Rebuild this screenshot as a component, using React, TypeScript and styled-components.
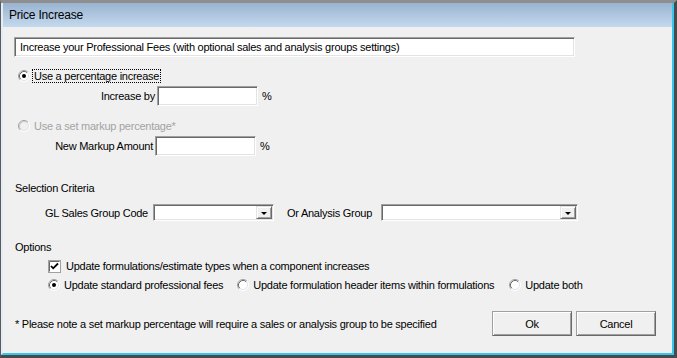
import styled, { createGlobalStyle } from "styled-components";

const GlobalStyle = createGlobalStyle`
  html, body {
    margin: 0;
    padding: 0;
    background: #6d6d6d;
  }
  body {
    font-family: "Liberation Sans", Arial, sans-serif;
    font-size: 11px;
    letter-spacing: -0.25px;
    color: #000;
  }
`;

const Window = styled.div`
  width: 677px;
  height: 358px;
  box-sizing: border-box;
  border-top: 3px solid #8e8e8e;
  border-left: 1px solid #5a5a5a;
  border-right: 3px solid #4a4a4a;
  border-bottom: 3px solid #4a4a4a;
  background: #f0f0f0;
`;

const Frame = styled.div`
  height: 100%;
  box-sizing: border-box;
  border-left: 2px solid #e4ecf5;
  border-right: 2px solid #38c6f0;
  border-bottom: 2px solid #38c6f0;
  display: flex;
  flex-direction: column;
`;

const TitleBar = styled.div`
  height: 24px;
  flex: none;
  display: flex;
  align-items: center;
  padding-left: 6px;
  background: linear-gradient(#99b4d1, #c4d9ee);
  font-size: 12px;
  letter-spacing: -0.2px;
  color: #000;
`;

const Client = styled.div`
  flex: 1;
  display: flex;
  flex-direction: column;
  padding: 0 16px 0 11px;
`;

const Row = styled.div<{ $top: number; $indent?: number; $h?: number }>`
  display: flex;
  align-items: center;
  margin-top: ${(p) => p.$top}px;
  padding-left: ${(p) => p.$indent ?? 0}px;
  height: ${(p) => p.$h ?? 14}px;
  white-space: nowrap;
`;

const sunken = `
  box-sizing: border-box;
  background: #fff;
  border-style: solid;
  border-width: 1px;
  border-color: #a0a0a0 #fff #fff #a0a0a0;
  box-shadow: inset 1px 1px #696969, inset -1px -1px #e3e3e3;
`;

const DescBox = styled.div`
  ${sunken}
  width: 561px;
  height: 20px;
  display: flex;
  align-items: center;
  padding-left: 5px;
  white-space: nowrap;
`;

const Field = styled.div<{ $w: number }>`
  ${sunken}
  width: ${(p) => p.$w}px;
  height: 20px;
`;

const FieldLabel = styled.span<{ $w: number; $gap: number; $align?: string; $left?: number }>`
  width: ${(p) => p.$w}px;
  margin-right: ${(p) => p.$gap}px;
  margin-left: ${(p) => p.$left ?? 0}px;
  text-align: ${(p) => p.$align ?? "right"};
  flex: none;
`;

const Unit = styled.span`
  margin-left: 4px;
`;

const Combo = styled.div<{ $w: number }>`
  ${sunken}
  width: ${(p) => p.$w}px;
  height: 17px;
  display: flex;
  justify-content: flex-end;
  padding: 1px;
`;

const DropButton = styled.div`
  width: 16px;
  height: 13px;
  box-sizing: border-box;
  background: #f0f0f0;
  border-style: solid;
  border-width: 1px;
  border-color: #e3e3e3 #696969 #696969 #e3e3e3;
  box-shadow: inset 1px 1px #fff, inset -1px -1px #a0a0a0;
  display: flex;
  align-items: center;
  justify-content: center;
  &::after {
    content: "";
    border-left: 3px solid transparent;
    border-right: 3px solid transparent;
    border-top: 3px solid #000;
    margin-top: 1px;
  }
`;

const Choice = styled.label<{ $disabled?: boolean; $gap?: number; $after?: number }>`
  display: flex;
  align-items: center;
  gap: ${(p) => p.$gap ?? 4}px;
  margin-right: ${(p) => p.$after ?? 0}px;
  color: ${(p) => (p.$disabled ? "#a3a3a3" : "#000")};
`;

const Focused = styled.span`
  outline: 1px dotted #000;
  outline-offset: 0px;
  padding: 0 1px;
`;

const Heading = styled.div<{ $top: number }>`
  margin-top: ${(p) => p.$top}px;
  height: 14px;
  line-height: 14px;
  padding-left: 1px;
`;

const Footer = styled.div`
  margin-top: 19px;
  display: flex;
  align-items: center;
`;

const Note = styled.span`
  flex: 1;
  padding-left: 1px;
  white-space: nowrap;
`;

const Button = styled.button`
  width: 80px;
  height: 25px;
  margin-left: 4px;
  box-sizing: border-box;
  font: inherit;
  letter-spacing: inherit;
  color: #000;
  background: #f0f0f0;
  border-style: solid;
  border-width: 1px;
  border-color: #a0a0a0 #696969 #696969 #a0a0a0;
  box-shadow: inset 1px 1px #fff, inset -1px -1px #a0a0a0;
  padding: 0;
`;

function Radio({ checked, disabled }: { checked?: boolean; disabled?: boolean }) {
  return (
    <svg width="12" height="12" viewBox="0 0 12 12">
      <circle cx="6" cy="6" r="5" fill={disabled ? "#f0f0f0" : "#fff"} />
      <path d="M2.11 9.89 A5.5 5.5 0 0 1 9.89 2.11" fill="none" stroke="#a0a0a0" />
      <path d="M9.89 2.11 A5.5 5.5 0 0 1 2.11 9.89" fill="none" stroke="#fff" />
      <path d="M2.82 9.18 A4.5 4.5 0 0 1 9.18 2.82" fill="none" stroke={disabled ? "#c8c8c8" : "#696969"} />
      <path d="M9.18 2.82 A4.5 4.5 0 0 1 2.82 9.18" fill="none" stroke="#e3e3e3" />
      {checked && <circle cx="6" cy="6" r="2" fill="#000" />}
    </svg>
  );
}

function Check() {
  return (
    <svg width="13" height="13" viewBox="0 0 13 13">
      <rect x="0.5" y="0.5" width="12" height="12" fill="#fff" stroke="#a0a0a0" />
      <path d="M1.5 11.5 V1.5 H11.5" fill="none" stroke="#696969" />
      <path d="M3 6 L5.2 8.3 L10 3.5" fill="none" stroke="#000" strokeWidth="1.8" />
    </svg>
  );
}

export default function App() {
  return (
    <>
      <GlobalStyle />
      <Window>
        <Frame>
          <TitleBar>Price Increase</TitleBar>
          <Client>
            <Row $top={10} $h={20}>
              <DescBox>
                Increase your Professional Fees (with optional sales and analysis groups settings)
              </DescBox>
            </Row>

            <Row $top={11} $indent={4} $h={16}>
              <Choice $gap={3}>
                <Radio checked />
                <Focused>Use a percentage increase</Focused>
              </Choice>
            </Row>
            <Row $top={2} $h={20}>
              <FieldLabel $w={141} $gap={2}>Increase by</FieldLabel>
              <Field $w={101} />
              <Unit>%</Unit>
            </Row>

            <Row $top={12} $indent={4} $h={16}>
              <Choice $gap={4} $disabled>
                <Radio disabled />
                Use a set markup percentage*
              </Choice>
            </Row>
            <Row $top={2} $h={20}>
              <FieldLabel $w={139} $gap={2}>New Markup Amount</FieldLabel>
              <Field $w={101} />
              <Unit>%</Unit>
            </Row>

            <Heading $top={25}>Selection Criteria</Heading>
            <Row $top={9} $h={17}>
              <FieldLabel $w={134} $gap={5}>GL Sales Group Code</FieldLabel>
              <Combo $w={121}>
                <DropButton />
              </Combo>
              <FieldLabel $w={91} $gap={3} $align="left" $left={13}>
                Or Analysis Group
              </FieldLabel>
              <Combo $w={197}>
                <DropButton />
              </Combo>
            </Row>

            <Heading $top={19}>Options</Heading>
            <Row $top={5} $indent={34}>
              <Choice $gap={5}>
                <Check />
                Update formulations/estimate types when a component increases
              </Choice>
            </Row>
            <Row $top={5} $indent={34}>
              <Choice $after={14}>
                <Radio checked />
                Update standard professional fees
              </Choice>
              <Choice $after={15}>
                <Radio />
                Update formulation header items within formulations
              </Choice>
              <Choice>
                <Radio />
                Update both
              </Choice>
            </Row>

            <Footer>
              <Note>* Please note a set markup percentage will require a sales or analysis group to be specified</Note>
              <Button>Ok</Button>
              <Button>Cancel</Button>
            </Footer>
          </Client>
        </Frame>
      </Window>
    </>
  );
}
